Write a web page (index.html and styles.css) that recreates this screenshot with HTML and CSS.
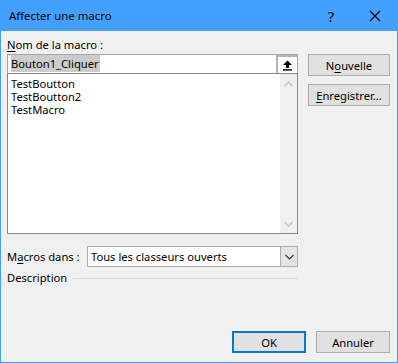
FILE: index.html
```html
<!DOCTYPE html>
<html lang="fr">
<head>
    <meta charset="UTF-8">
    <title>Affecter une macro</title>
    <link rel="stylesheet" href="styles.css">
</head>
<body>
    <div class="dialog">
        <div class="titlebar">
            <span class="title">Affecter une macro</span>
            <span class="title-btn help">?</span>
            <span class="title-btn close">
                <svg width="12" height="12" viewBox="0 0 12 12"><path d="M1 1L11 11M11 1L1 11" stroke="#000" stroke-width="1.1" fill="none"/></svg>
            </span>
        </div>

        <div class="content">
            <div class="main">
                <div class="label"><u>N</u>om de la macro :</div>
                <div class="name-input">
                    <span class="name-text"><span class="selected">Bouton1_Cliquer</span></span>
                    <span class="collapse-btn">
                        <svg width="11" height="11" viewBox="0 0 11 11"><path d="M5.5 0.5L1 5H4V8H7V5H10Z" fill="#000"/><rect x="1" y="9.2" width="9" height="1.4" fill="#000"/></svg>
                    </span>
                </div>
                <div class="macro-list">
                    <div class="items">
                        <div class="item">TestBoutton</div>
                        <div class="item">TestBoutton2</div>
                        <div class="item">TestMacro</div>
                    </div>
                    <div class="scrollbar">
                        <svg width="9" height="6" viewBox="0 0 9 6"><path d="M0.5 5L4.5 1L8.5 5" stroke="#c2c2c2" stroke-width="1.4" fill="none"/></svg>
                        <svg width="9" height="6" viewBox="0 0 9 6"><path d="M0.5 1L4.5 5L8.5 1" stroke="#c2c2c2" stroke-width="1.4" fill="none"/></svg>
                    </div>
                </div>
                <div class="macros-in">
                    <span class="label-inline">M<u>a</u>cros dans :</span>
                    <div class="combo">
                        <span class="combo-text">Tous les classeurs ouverts</span>
                        <span class="combo-btn">
                            <svg width="9" height="6" viewBox="0 0 9 6"><path d="M0.5 1L4.5 5L8.5 1" stroke="#333" stroke-width="1.1" fill="none"/></svg>
                        </span>
                    </div>
                </div>
                <div class="description">
                    <span>Description</span>
                    <span class="rule"></span>
                </div>
            </div>
            <div class="side">
                <button class="btn">N<u>o</u>uvelle</button>
                <button class="btn"><u>E</u>nregistrer...</button>
            </div>
        </div>

        <div class="footer">
            <button class="btn btn-default">OK</button>
            <button class="btn">Annuler</button>
        </div>
    </div>
</body>
</html>
```

FILE: styles.css
```css
* {
    margin: 0;
    padding: 0;
    box-sizing: border-box;
}

body {
    font-family: "Noto Sans", "Open Sans", sans-serif;
    font-size: 11.2px;
    color: #000;
    background: #f0f0f0;
}

u {
    text-decoration: underline;
    text-underline-offset: 2px;
}

.dialog {
    width: 398px;
    height: 363px;
    background: #f0f0f0;
    border: 1px solid #43a0ff;
    border-top: none;
    display: flex;
    flex-direction: column;
}

.titlebar {
    height: 31px;
    margin: 0 -1px;
    background: #43a0ff;
    display: flex;
    align-items: center;
    padding-left: 9px;
    flex-shrink: 0;
}

.title {
    flex: 1;
    font-size: 11.4px;
    padding-bottom: 1px;
}

.title-btn {
    width: 46px;
    height: 31px;
    display: flex;
    align-items: center;
    justify-content: center;
}

.help {
    font-size: 15px;
    margin-right: -2px;
}

.close {
    padding-top: 1px;
}

.content {
    display: flex;
    gap: 10px;
    padding: 6px 7px 0 6px;
}

.main {
    width: 291px;
}

.label {
    line-height: 15px;
    margin-bottom: 2px;
}

.name-input {
    height: 19px;
    background: #fff;
    border: 1px solid #a6a6a6;
    border-bottom: none;
    display: flex;
    align-items: center;
}

.name-text {
    flex: 1;
    padding-left: 3px;
    line-height: 16px;
}

.selected {
    background: #cccccc;
    padding: 1px 1px 1px 0;
}

.collapse-btn {
    width: 21px;
    height: 18px;
    border: 2px solid #b4b4b4;
    border-right: none;
    border-bottom: none;
    display: flex;
    align-items: center;
    justify-content: center;
    background: #fff;
}

.macro-list {
    height: 161px;
    background: #fff;
    border: 1px solid #828790;
    display: flex;
}

.items {
    flex: 1;
    padding: 3px 0 0 3px;
}

.item {
    line-height: 13px;
}

.scrollbar {
    width: 17px;
    background: #f0f0f0;
    display: flex;
    flex-direction: column;
    justify-content: space-between;
    align-items: center;
    padding: 7px 0 6px;
}

.macros-in {
    display: flex;
    align-items: center;
    margin-top: 12px;
}

.label-inline {
    width: 80px;
}

.combo {
    flex: 1;
    height: 21px;
    background: #fff;
    border: 1px solid #adadad;
    display: flex;
    align-items: center;
}

.combo-text {
    flex: 1;
    padding-left: 3px;
}

.combo-btn {
    width: 17px;
    height: 19px;
    background: #e5e5e5;
    border-left: 1px solid #adadad;
    display: flex;
    align-items: center;
    justify-content: center;
}

.description {
    display: flex;
    align-items: center;
    gap: 6px;
    margin-top: 3px;
    line-height: 15px;
}

.rule {
    flex: 1;
    height: 1px;
    background: #dcdcdc;
    margin-top: 1px;
}

.side {
    display: flex;
    flex-direction: column;
    gap: 8px;
    padding-top: 17px;
}

.btn {
    width: 82px;
    height: 22px;
    font-family: inherit;
    font-size: 11.2px;
    color: #000;
    background: #e1e1e1;
    border: 1px solid #adadad;
    cursor: pointer;
}

.footer {
    margin-top: auto;
    display: flex;
    justify-content: flex-end;
    gap: 10px;
    padding: 0 7px 9px 0;
}

.footer .btn {
    width: 74px;
}

.btn-default {
    border: 2px solid #0078d7;
}
```
